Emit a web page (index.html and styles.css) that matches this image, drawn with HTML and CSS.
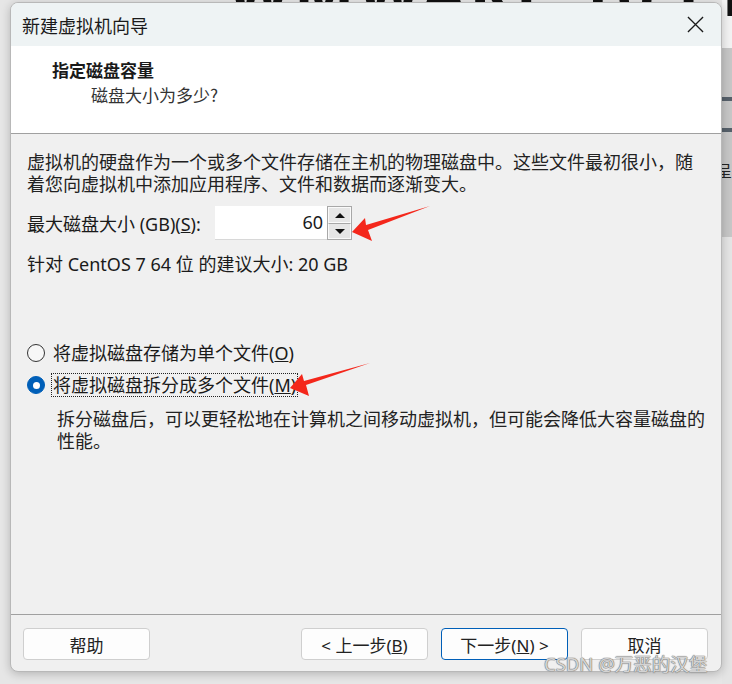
FILE: index.html
```html
<html lang="zh-CN">
<head>
    <meta charset="UTF-8">
    <title>新建虚拟机向导</title>
    <link rel="stylesheet" href="styles.css">
</head>
<body>
    <div class="backdrop-title">WMWARE 16 PRO <span class="purple">V</span></div>
    <div class="dialog" role="dialog" aria-labelledby="dlg-title">
        <div class="titlebar">
            <span id="dlg-title">新建虚拟机向导</span>
            <svg class="close" width="18" height="18" viewBox="0 0 18 18" aria-label="关闭">
                <path d="M1 1L17 17M17 1L1 17" stroke="#1a1a1a" stroke-width="1.4" fill="none"/>
            </svg>
        </div>
        <div class="header">
            <div class="header-title">指定磁盘容量</div>
            <div class="header-sub">磁盘大小为多少?</div>
        </div>
        <div class="content">
            <p class="intro">虚拟机的硬盘作为一个或多个文件存储在主机的物理磁盘中。这些文件最初很小，随着您向虚拟机中添加应用程序、文件和数据而逐渐变大。</p>
            <div class="size-row">
                <label>最大磁盘大小 (GB)(<u>S</u>):</label>
                <div class="spinner">
                    <div class="spin-value">60</div>
                    <div class="spin-buttons">
                        <div class="spin-btn"><span class="tri-up"></span></div>
                        <div class="spin-btn"><span class="tri-down"></span></div>
                    </div>
                </div>
            </div>
            <p class="hint">针对 CentOS 7 64 位 的建议大小: 20 GB</p>
            <div class="radio-row first">
                <span class="radio"></span>
                <span class="radio-label">将虚拟磁盘存储为单个文件(<u>O</u>)</span>
            </div>
            <div class="radio-row">
                <span class="radio checked"></span>
                <span class="radio-label focused">将虚拟磁盘拆分成多个文件(<u>M</u>)</span>
            </div>
            <p class="desc">拆分磁盘后，可以更轻松地在计算机之间移动虚拟机，但可能会降低大容量磁盘的性能。</p>
        </div>
        <div class="footer">
            <button class="btn">帮助</button>
            <div class="spacer"></div>
            <button class="btn">&lt; 上一步(<u>B</u>)</button>
            <button class="btn primary">下一步(<u>N</u>) &gt;</button>
            <button class="btn">取消</button>
        </div>
    </div>
    <div class="side-strip">
        <div class="strip-top"></div>
        <div class="strip-grey"></div>
        <div class="strip-line"></div>
        <div class="strip-grey short"></div>
        <div class="strip-line"></div>
        <div class="strip-grey tall"><span>呈</span></div>
        <div class="strip-bottom"></div>
    </div>
    <svg class="arrows" width="732" height="684" viewBox="0 0 732 684">
        <polygon points="352,232 365,218 366,225 430,206 368,230 372,241" fill="#f4271b"/>
        <polygon points="290,388 302,374 304,381 370,363 306,385 309,396" fill="#f4271b"/>
    </svg>
    <div class="watermark">CSDN @万恶的汉堡</div>
</body>
</html>
```

FILE: styles.css
```css
:root {
    --title-bg: #eef3f4;
    --body-bg: #f0f0f0;
    --line: #a0a0a0;
    --text: #1a1a1a;
    --blue: #005fb8;
    --arrow: #f4271b;
}
body {
    margin: 0;
    width: 732px;
    height: 684px;
    overflow: hidden;
    position: relative;
    display: flex;
    padding: 2px 0 0 10px;
    box-sizing: border-box;
    background: #e6e6e6;
    font-family: "Noto Sans", "Noto Sans CJK SC", sans-serif;
    color: var(--text);
}
.backdrop-title {
    position: absolute;
    top: -52px;
    left: 228px;
    font-size: 64px;
    font-weight: bold;
    letter-spacing: 4px;
    white-space: nowrap;
    color: #111;
}
.backdrop-title .purple {
    color: #7a3fc0;
}
.dialog {
    position: relative;
    z-index: 1;
    width: 712px;
    height: 670px;
    box-sizing: border-box;
    border: 1px solid #b8b8b8;
    border-radius: 8px;
    overflow: hidden;
    display: flex;
    flex-direction: column;
    background: var(--body-bg);
    box-shadow: 0 2px 10px rgba(0, 0, 0, 0.22);
}
.titlebar {
    height: 43px;
    background: var(--title-bg);
    display: flex;
    align-items: center;
    justify-content: space-between;
    padding: 0 17px 0 11px;
    font-size: 18px;
}
.close {
    width: 17px;
    height: 17px;
}
.header {
    height: 88px;
    background: #fff;
    border-bottom: 1px solid var(--line);
    box-sizing: border-box;
    padding: 12px 0 0 41px;
    font-family: "Noto Sans CJK SC", sans-serif;
}
.header-title {
    font-size: 17px;
    font-weight: bold;
    line-height: 24px;
}
.header-sub {
    font-size: 17px;
    line-height: 26px;
    padding-left: 39px;
    color: #333;
}
.content {
    flex: 1;
    padding: 17px 8px 0 16px;
    font-size: 18px;
    border-bottom: 1px solid var(--line);
}
.content p {
    margin: 0;
}
.intro {
    line-height: 22px;
    margin-right: 12px !important;
    color: #222;
}
.size-row {
    display: flex;
    align-items: center;
    margin-top: 11px;
    height: 34px;
}
.size-row label {
    width: 188px;
}
.spinner {
    display: flex;
    height: 34px;
}
.spin-value {
    width: 112px;
    background: #fff;
    border-bottom: 1px solid #d8d8d8;
    box-sizing: border-box;
    text-align: right;
    padding-right: 4px;
    line-height: 33px;
    font-size: 18px;
}
.spin-buttons {
    width: 25px;
    display: flex;
    flex-direction: column;
    border: 1px solid #a8a8a8;
    box-sizing: border-box;
    background: #e6e6e6;
}
.spin-btn {
    flex: 1;
    display: flex;
    align-items: center;
    justify-content: center;
    border: 1px solid #fafafa;
}
.spin-btn + .spin-btn {
    border-top: 1px solid #a8a8a8;
}
.tri-up {
    border-left: 5px solid transparent;
    border-right: 5px solid transparent;
    border-bottom: 5px solid #111;
}
.tri-down {
    border-left: 5px solid transparent;
    border-right: 5px solid transparent;
    border-top: 5px solid #111;
}
.hint {
    margin-top: 13px !important;
    line-height: 22px;
}
.radio-row {
    display: flex;
    align-items: center;
    height: 26px;
    margin-top: 6px;
}
.radio-row.first {
    margin-top: 65px;
}
.radio {
    width: 18px;
    height: 18px;
    box-sizing: border-box;
    border: 1px solid #333;
    border-radius: 50%;
    background: #f7f7f7;
    margin-right: 6px;
    flex-shrink: 0;
    display: flex;
    align-items: center;
    justify-content: center;
}
.radio.checked {
    background: var(--blue);
    border-color: var(--blue);
}
.radio.checked::after {
    content: "";
    width: 7px;
    height: 7px;
    border-radius: 50%;
    background: #fff;
}
.radio-label {
    line-height: 22px;
    padding: 0 1px;
    border: 1px dotted transparent;
}
.radio-label.focused {
    border-color: #222;
}
.desc {
    margin-top: 10px !important;
    padding-left: 30px;
    line-height: 22px;
    color: #222;
}
.footer {
    height: 56px;
    display: flex;
    align-items: flex-start;
    gap: 13px;
    padding: 13px 13px 0 12px;
    box-sizing: border-box;
}
.spacer {
    flex: 1;
}
.btn {
    width: 127px;
    height: 32px;
    background: #fdfdfd;
    border: 1px solid #cfcfcf;
    border-radius: 4px;
    font-family: "Noto Sans", "Noto Sans CJK SC", sans-serif;
    font-size: 17px;
    color: #222;
    padding: 0;
}
.btn.primary {
    border-color: var(--blue);
}
.side-strip {
    width: 10px;
    display: flex;
    flex-direction: column;
    margin-top: -2px;
}
.strip-top {
    height: 48px;
    background: #f2f2f2;
}
.strip-grey {
    height: 49px;
    background: #c6c6c6;
}
.strip-grey.short {
    height: 27px;
}
.strip-grey.tall {
    height: 105px;
    overflow: hidden;
    font-family: "Noto Sans CJK SC", sans-serif;
    font-size: 16px;
}
.strip-grey.tall span {
    display: block;
    margin: 26px 0 0 -6px;
    color: #222;
}
.strip-line {
    height: 4px;
    background: #56606a;
}
.strip-bottom {
    flex: 1;
    background: #e4e4e4;
}
.arrows {
    position: absolute;
    top: 0;
    left: 0;
    z-index: 2;
    pointer-events: none;
}
.watermark {
    position: absolute;
    z-index: 3;
    left: 544px;
    top: 650px;
    font-size: 18.5px;
    white-space: nowrap;
    color: rgba(225, 225, 225, 0.9);
    text-shadow: 0 0 1px #777, 0 0 1px #777, 0 0 1px #777;
    font-family: "Noto Sans", "Noto Sans CJK SC", sans-serif;
}
```
